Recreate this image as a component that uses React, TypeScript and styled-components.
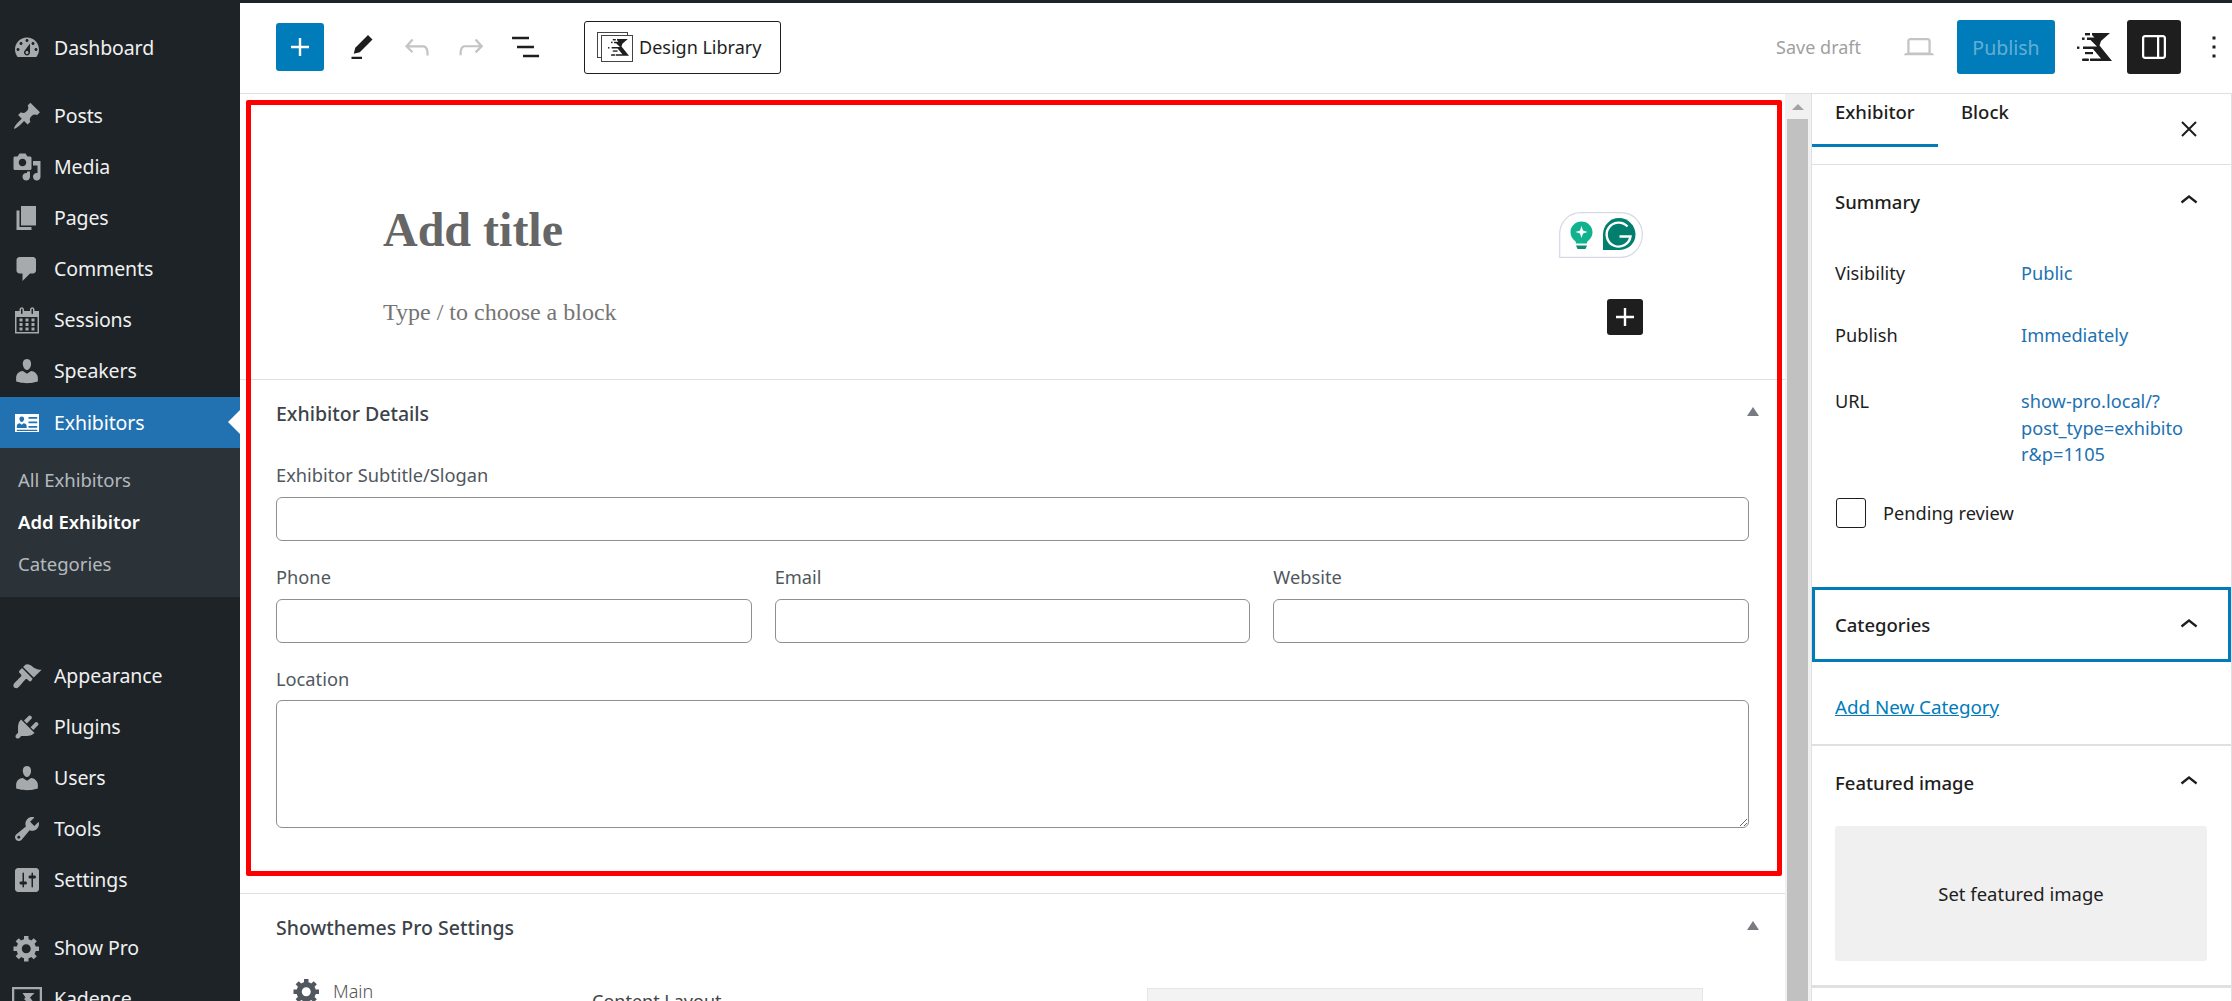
import React from "react";
import styled, { createGlobalStyle } from "styled-components";

const Global = createGlobalStyle`
  html, body { margin: 0; padding: 0; height: 1001px; overflow: hidden; background: #fff; }
  body { font-family: "Noto Sans", "Open Sans", sans-serif; font-size: 19.5px; }
  * { box-sizing: border-box; }
`;

const Shell = styled.div`
  display: grid;
  grid-template-columns: 240px 1fr;
  width: 2232px;
  height: 1001px;
  overflow: hidden;
  position: relative;
`;

/* ---------- admin menu ---------- */
const AdminMenu = styled.nav`
  background: #1d2327;
  padding-top: 22px;
  height: 1001px;
  overflow: hidden;
`;
const MenuGroup = styled.div<{ $gap?: number }>`
  margin-top: ${(p) => p.$gap ?? 0}px;
`;
const MenuItem = styled.div<{ $active?: boolean }>`
  position: relative;
  height: 51px;
  margin-top: ${(p) => (p.$active ? 1 : 0)}px;
  display: flex;
  align-items: center;
  gap: 12px;
  padding-left: 12px;
  color: ${(p) => (p.$active ? "#fff" : "#f0f0f1")};
  background: ${(p) => (p.$active ? "#2271b1" : "transparent")};
  line-height: 1;
  letter-spacing: -0.1px;
  ${(p) =>
    p.$active &&
    `&::after {
      content: "";
      position: absolute;
      right: 0;
      top: 13px;
      border: 12px solid transparent;
      border-right-color: #fff;
      border-left-width: 0;
    }`}
`;
const MenuIcon = styled.svg<{ $active?: boolean; $color?: string }>`
  width: 30px;
  height: 30px;
  flex: none;
  fill: ${(p) => p.$color ?? (p.$active ? "#fff" : "#a7aaad")};
`;
const SubMenu = styled.div`
  background: #2c3338;
  padding: 10px 0 13px;
`;
const SubItem = styled.div<{ $current?: boolean }>`
  height: 42px;
  display: flex;
  align-items: center;
  padding-left: 18px;
  font-size: 18.5px;
  color: ${(p) => (p.$current ? "#fff" : "rgba(240,246,252,.7)")};
  font-weight: ${(p) => (p.$current ? 600 : 400)};
`;

/* ---------- main column ---------- */
const Main = styled.div`
  border-top: 3px solid #1d2327;
  display: flex;
  flex-direction: column;
  min-width: 0;
  height: 1001px;
`;
const Toolbar = styled.header`
  height: 91px;
  flex: none;
  display: flex;
  align-items: center;
  justify-content: space-between;
  border-bottom: 1px solid #e0e0e0;
  padding: 0 0 2px 36px;
`;
const ToolGroup = styled.div`
  display: flex;
  align-items: center;
`;
const InserterButton = styled.button`
  width: 48px;
  height: 48px;
  border: 0;
  border-radius: 3px;
  background: #007cba;
  padding: 6px;
  margin-right: 11px;
  display: flex;
`;
const ToolIcon = styled.svg<{ $color?: string; $size?: number }>`
  width: ${(p) => p.$size ?? 36}px;
  height: ${(p) => p.$size ?? 36}px;
  fill: ${(p) => p.$color ?? "#1e1e1e"};
  flex: none;
`;
const ToolSlot = styled.span`
  width: 54.5px;
  display: flex;
  justify-content: center;
`;
const LibraryButton = styled.button`
  height: 53px;
  width: 197px;
  margin-left: 31px;
  border: 1px solid #1e1e1e;
  border-radius: 3px;
  background: #fff;
  display: flex;
  align-items: center;
  gap: 6px;
  padding: 0 0 0 12px;
  font: 400 18px "Noto Sans", sans-serif;
  color: #1e1e1e;
`;
const SaveDraft = styled.span`
  color: #a0a0a0;
  font-size: 18px;
  margin-right: 40px;
`;
const PublishButton = styled.button`
  width: 98px;
  height: 54px;
  border: 0;
  border-radius: 3px;
  background: #007cba;
  color: rgba(255, 255, 255, 0.4);
  font: 400 19.5px "Noto Sans", sans-serif;
  margin: 0 22px 0 20px;
`;
const PanelToggle = styled.button`
  width: 54px;
  height: 54px;
  border: 0;
  border-radius: 3px;
  background: #1e1e1e;
  padding: 9px;
  display: flex;
  margin: 0 15px 0 15px;
`;

const Workspace = styled.div`
  flex: 1;
  display: flex;
  min-height: 0;
`;
const Editor = styled.main`
  width: 1545px;
  flex: none;
  overflow: hidden;
  display: flex;
  flex-direction: column;
`;
const TitleArea = styled.section`
  height: 286px;
  flex: none;
  border-bottom: 1px solid #e0e0e0;
  padding: 107px 142px 0 143px;
`;
const TitleRow = styled.div`
  display: flex;
  justify-content: space-between;
  align-items: flex-start;
`;
const TitleText = styled.h1`
  margin: 0;
  font: 700 48px/58px "Liberation Serif", serif;
  color: #666;
`;
const BlockRow = styled(TitleRow)`
  margin-top: 35px;
`;
const BlockHint = styled.p`
  margin: 0;
  font: 400 24px/36px "Liberation Serif", serif;
  color: #757575;
`;
const BlockAdd = styled.button`
  width: 36px;
  height: 36px;
  margin-top: 5px;
  border: 0;
  border-radius: 3px;
  background: #1e1e1e;
  padding: 0;
  display: flex;
`;
const Badge = styled.svg`
  width: 84px;
  height: 46px;
  margin-top: 11px;
  flex: none;
`;
const MetaBox = styled.section`
  padding: 0 36px;
  flex: none;
`;
const DetailsBox = styled(MetaBox)`
  height: 514px;
  border-bottom: 1px solid #e0e0e0;
`;
const MetaHeader = styled.div<{ $h: number }>`
  height: ${(p) => p.$h}px;
  display: flex;
  align-items: center;
  justify-content: space-between;
  font-weight: 500;
  color: #3c434a;
  font-size: 19.5px;
`;
const Collapse = styled.i`
  width: 0;
  height: 0;
  border: 6px solid transparent;
  border-top-width: 0;
  border-bottom: 9px solid #787c82;
  margin: -4px -10px 0 0;
`;
const FieldLabel = styled.label`
  display: block;
  height: 28px;
  line-height: 28px;
  color: #50575e;
  font-size: 18.25px;
  margin-bottom: 8px;
`;
const Field = styled.div<{ $top?: number }>`
  margin-top: ${(p) => p.$top ?? 0}px;
`;
const FieldRow = styled.div`
  display: grid;
  grid-template-columns: repeat(3, 1fr);
  gap: 23px;
  margin-top: 22px;
`;
const TextInput = styled.input`
  display: block;
  width: 100%;
  height: 44px;
  border: 1px solid #8c8f94;
  border-radius: 6px;
  background: #fff;
`;
const TextArea = styled.textarea`
  display: block;
  width: 100%;
  height: 128px;
  margin-top: -1px;
  border: 1px solid #8c8f94;
  border-radius: 6px;
  background: #fff;
`;
const SettingsBody = styled.div`
  display: flex;
  padding: 18px 0 0 16px;
`;
const SettingsTab = styled.div`
  width: 300px;
  flex: none;
  display: flex;
  align-items: center;
  gap: 11px;
  height: 26px;
  color: #555;
  font-size: 18px;
  font-weight: 300;
`;
const ContentLabel = styled.div`
  width: 555px;
  flex: none;
  padding-top: 11px;
  color: #444;
  font-size: 18px;
`;
const ContentBox = styled.div`
  width: 556px;
  height: 60px;
  margin-top: 10px;
  background: #f3f3f3;
  border: 1px solid #e5e5e5;
`;

/* ---------- scrollbar ---------- */
const ScrollTrack = styled.div`
  width: 26px;
  flex: none;
  background: #f1f1f1;
  padding-left: 2px;
  padding-right: 3px;
`;
const ScrollArrow = styled.div`
  height: 25px;
  display: flex;
  align-items: center;
  justify-content: center;
  &::before {
    content: "";
    border: 6px solid transparent;
    border-top-width: 0;
    border-bottom: 6px solid #a3a3a3;
  }
`;
const ScrollThumb = styled.div`
  height: 900px;
  background: #c1c1c1;
`;

/* ---------- right sidebar ---------- */
const SidePanel = styled.aside`
  flex: 1;
  min-width: 0;
  border-left: 1px solid #e0e0e0;
  border-right: 1px solid #e0e0e0;
  overflow: hidden;
  color: #1e1e1e;
`;
const TabBar = styled.div`
  height: 71px;
  border-bottom: 1px solid #e0e0e0;
  display: flex;
  align-items: flex-start;
`;
const Tab = styled.div<{ $active?: boolean; $w: number }>`
  width: ${(p) => p.$w}px;
  height: 53px;
  padding-left: 23px;
  line-height: 36px;
  font-weight: 500;
  font-size: 18.5px;
  border-bottom: 3px solid ${(p) => (p.$active ? "#007cba" : "transparent")};
`;
const CloseIcon = styled.svg`
  width: 24px;
  height: 24px;
  margin: 23px 30px 0 auto;
  stroke: #1e1e1e;
  stroke-width: 2;
  fill: none;
  flex: none;
`;
const PanelHeader = styled.div<{ $h: number; $focus?: boolean }>`
  height: ${(p) => p.$h}px;
  display: flex;
  align-items: center;
  justify-content: space-between;
  font-weight: 500;
  font-size: 18.5px;
  padding: ${(p) => (p.$focus ? "0 21px 0 20px" : "0 24px 0 23px")};
  ${(p) => p.$focus && `border: 3px solid #007cba;`}
`;
const SummaryBody = styled.div`
  padding: 23px 23px 0;
  height: 350px;
  font-size: 18.2px;
`;
const SummaryRow = styled.div<{ $top?: number }>`
  display: grid;
  grid-template-columns: 186px 1fr;
  margin-top: ${(p) => p.$top ?? 0}px;
  line-height: 26.5px;
  color: #1e1e1e;
`;
const ValueLink = styled.span`
  color: #2271b1;
`;
const CheckRow = styled.div`
  display: flex;
  align-items: center;
  gap: 17px;
  margin: 30px 0 0 1px;
`;
const CheckBox = styled.span`
  width: 30px;
  height: 30px;
  border: 1px solid #1e1e1e;
  border-radius: 3px;
`;
const CategoryBody = styled.div`
  height: 84px;
  padding: 31px 23px 0;
  border-bottom: 2px solid #e0e0e0;
`;
const AddLink = styled.a`
  color: #007cba;
  text-decoration: underline;
  font-size: 18.8px;
`;
const FeaturedBody = styled.div`
  height: 170px;
  padding: 8px 23px 0;
  border-bottom: 3px solid #e0e0e0;
`;
const FeaturedBox = styled.div`
  height: 135px;
  width: 372px;
  background: #f0f0f0;
  border-radius: 3px;
  display: flex;
  align-items: center;
  justify-content: center;
  font-size: 18.5px;
`;

/* ---------- annotation ---------- */
const Highlight = styled.div`
  position: absolute;
  left: 246px;
  top: 100px;
  width: 1536px;
  height: 776px;
  border: 5px solid #f00;
  border-radius: 2px;
  pointer-events: none;
`;

const P = {
  dashboard:
    "M3.76 16h12.48c1.1-1.37 1.76-3.11 1.76-5 0-4.42-3.58-8-8-8s-8 3.58-8 8c0 1.89.66 3.63 1.76 5zM10 4c.55 0 1 .45 1 1s-.45 1-1 1-1-.45-1-1 .45-1 1-1zM6 6c.55 0 1 .45 1 1s-.45 1-1 1-1-.45-1-1 .45-1 1-1zm8 0c.55 0 1 .45 1 1s-.45 1-1 1-1-.45-1-1 .45-1 1-1zm-5.37 5.55L12 7v6c0 1.1-.9 2-2 2s-2-.9-2-2c0-.57.24-1.08.63-1.45zM4 10c.55 0 1 .45 1 1s-.45 1-1 1-1-.45-1-1 .45-1 1-1zm12 0c.55 0 1 .45 1 1s-.45 1-1 1-1-.45-1-1 .45-1 1-1zm-5 3c0-.55-.45-1-1-1s-1 .45-1 1 .45 1 1 1 1-.45 1-1z",
  pin: "M10.44 3.02l1.82-1.82 6.36 6.35-1.83 1.82c-1.05-.68-2.48-.57-3.41.36l-.75.75c-.92.93-1.04 2.35-.35 3.41l-1.83 1.82-2.41-2.41-2.8 2.79c-.42.42-3.38 2.71-3.8 2.29s1.86-3.39 2.28-3.81l2.79-2.79L4.1 9.36l1.83-1.82c1.05.69 2.48.57 3.4-.36l.75-.75c.93-.92 1.05-2.35.36-3.41z",
  media:
    "M13 11V4c0-.55-.45-1-1-1h-1.67L9 1H5L3.67 3H2c-.55 0-1 .45-1 1v7c0 .55.45 1 1 1h10c.55 0 1-.45 1-1zM7 4.5c1.38 0 2.5 1.12 2.5 2.5S8.38 9.5 7 9.5 4.5 8.38 4.5 7 5.62 4.5 7 4.5zM14 6h5v10.5c0 1.38-1.12 2.5-2.5 2.5S14 17.88 14 16.5s1.12-2.5 2.5-2.5c.17 0 .34.02.5.05V9h-3V6zm-4 8.05V13h2v3.5c0 1.38-1.12 2.5-2.5 2.5S7 17.88 7 16.5 8.12 14 9.5 14c.17 0 .34.02.5.05z",
  page: "M6 15V2h10v13H6zm-1 1h8v2H3V5h2v11z",
  comment:
    "M5 2h9c1.1 0 2 .9 2 2v7c0 1.1-.9 2-2 2h-2l-5 5v-5H5c-1.1 0-2-.9-2-2V4c0-1.1.9-2 2-2z",
  calendar:
    "M15 4h3v15H2V4h3V3c0-.41.15-.76.44-1.06.29-.29.65-.44 1.06-.44s.77.15 1.06.44c.29.3.44.65.44 1.06v1h4V3c0-.41.15-.76.44-1.06.29-.29.65-.44 1.06-.44s.77.15 1.06.44c.29.3.44.65.44 1.06v1zM6 3v2.5c0 .14.05.26.15.36.09.09.21.14.35.14s.26-.05.35-.14c.1-.1.15-.22.15-.36V3c0-.14-.05-.26-.15-.35-.09-.1-.21-.15-.35-.15s-.26.05-.35.15c-.1.09-.15.21-.15.35zm7 0v2.5c0 .14.05.26.14.36.1.09.22.14.36.14s.26-.05.36-.14c.09-.1.14-.22.14-.36V3c0-.14-.05-.26-.14-.35-.1-.1-.22-.15-.36-.15s-.26.05-.36.15c-.09.09-.14.21-.14.35zm4 15V8H3v10h14zM7 9v2H5V9h2zm2 0h2v2H9V9zm4 2V9h2v2h-2zm-6 1v2H5v-2h2zm2 0h2v2H9v-2zm4 2v-2h2v2h-2zm-6 1v2H5v-2h2zm4 2H9v-2h2v2zm4 0h-2v-2h2v2z",
  user: "M10 9.25c-2.27 0-2.73-3.44-2.73-3.44C7 4.02 7.82 2 9.97 2c2.16 0 2.98 2.02 2.71 3.81 0 0-.41 3.44-2.68 3.44zm0 2.57L12.72 10c2.39 0 4.52 2.33 4.52 4.53v2.49s-3.65 1.13-7.24 1.13c-3.65 0-7.24-1.13-7.24-1.13v-2.49c0-2.25 1.94-4.48 4.47-4.48z",
  card: "M2 4h16v12H2V4zm4.500 1.600c-1.100 0-1.700.9-1.550 1.900.12.9.7 1.800 1.550 1.800s1.430-.9 1.550-1.800c.15-1-.45-1.900-1.550-1.900zM3.200 13.400h6.600v-1.300c0-1-1-1.900-2-1.900l-1.300.9-1.300-.9c-1 0-2 .9-2 1.900v1.300zM11 6v1.200h5.800V6H11zm0 3v1.200h5.800V9H11zm0 3v1.200h5.800V12H11zM3.200 14.500v.8h13.600v-.8H3.200z",
  brush:
    "M14.48 11.06L7.41 3.99l1.5-1.5c.5-.56 2.3-.47 3.51.32 1.21.8 1.43 1.28 2.91 2.1 1.18.64 2.45 1.26 4.45.85zm-.71.71L6.7 4.7 4.93 6.47c-.39.39-.39 1.02 0 1.41l1.06 1.06c.39.39.39 1.03 0 1.42-.6.6-3.99 3.91-4.49 4.54-.9 1.020-.7 2.4.2 3 1 .6 2 .3 2.7-.5.5-.5 3.900-4.500 4.500-5.100.39-.39 1.02-.39 1.41 0l1.06 1.06c.39.39 1.02.39 1.41 0z",
  plug: "M13.11 4.36L9.87 7.6 8 5.73l3.24-3.24c.35-.34 1.05-.2 1.56.32.52.51.66 1.21.31 1.55zm-8 1.77l.91-1.12 9.01 9.01-1.19.84c-.71.71-2.63 1.16-3.82 1.16H6.14L4.9 17.26c-.59.59-1.54.59-2.12 0-.59-.58-.59-1.53 0-2.12l1.24-1.24v-3.88c0-1.13.4-3.19 1.09-3.89zm7.26 3.97l3.24-3.24c.34-.35 1.04-.21 1.55.31.52.51.66 1.21.31 1.55l-3.24 3.25z",
  wrench:
    "M16.68 9.77c-1.34 1.34-3.3 1.67-4.95.99l-5.41 6.52c-.99.99-2.59.99-3.58 0s-.99-2.59 0-3.57l6.52-5.42c-.68-1.65-.35-3.61.99-4.95 1.28-1.28 3.12-1.62 4.72-1.06l-2.89 2.89 2.82 2.82 2.86-2.87c.53 1.58.18 3.39-1.08 4.65zM3.81 16.21c.4.39 1.04.39 1.43 0 .4-.4.4-1.04 0-1.43-.39-.4-1.03-.4-1.43 0-.39.39-.39 1.03 0 1.43z",
  sliders:
    "M18 16V4c0-1.1-.9-2-2-2H4c-1.1 0-2 .9-2 2v12c0 1.1.9 2 2 2h12c1.1 0 2-.9 2-2zM8 11h1c.55 0 1 .45 1 1s-.45 1-1 1H8v1.5c0 .28-.22.5-.5.5s-.5-.22-.5-.5V13H6c-.55 0-1-.45-1-1s.45-1 1-1h1V5.5c0-.28.22-.5.5-.5s.5.22.5.5V11zm5-2h-1c-.55 0-1-.45-1-1s.45-1 1-1h1V5.5c0-.28.22-.5.5-.5s.5.22.5.5V7h1c.55 0 1 .45 1 1s-.45 1-1 1h-1v5.5c0 .28-.22.5-.5.5s-.5-.22-.5-.5V9z",
  gear: "M18 12h-2.18c-.17.7-.44 1.35-.81 1.93l1.54 1.54-2.1 2.1-1.54-1.54c-.58.36-1.23.63-1.91.79V19H8v-2.18c-.68-.16-1.33-.43-1.91-.79l-1.54 1.54-2.12-2.12 1.54-1.54c-.36-.58-.63-1.23-.79-1.91H1V9.03h2.17c.16-.7.44-1.35.8-1.94L2.43 5.55l2.1-2.1 1.54 1.54c.58-.37 1.24-.64 1.93-.81V2h3v2.18c.68.16 1.33.43 1.91.79l1.54-1.54 2.12 2.12-1.54 1.54c.36.59.64 1.24.8 1.94H18V12zm-8.5 1.5c1.66 0 3-1.34 3-3s-1.34-3-3-3-3 1.34-3 3 1.34 3 3 3z",
  kadence: "M0 2h20v16H0V2zm1.500 1.500v13h17v-13h-17zM7 6h8l-3 3 3 4H9l1-1-2-2 1-1-2-3z",
  plus: "M18 11.2h-5.2V6h-1.6v5.2H6v1.6h5.2V18h1.6v-5.2H18z",
  pen: "m19 7-3-3-8.5 8.5-1 4 4-1L19 7Zm-7 11.5H5V20h7v-1.5Z",
  undo: "M18.3 11.7c-.6-.6-1.4-.9-2.3-.9H6.7l2.9-3.3-1.1-1-4.5 5L8.5 16l1-1-2.7-2.7H16c.5 0 .9.2 1.3.5 1 1 1 3.4 1 4.5v.3h1.5v-.2c0-1.5 0-4.3-1.5-5.7z",
  redo: "M15.6 6.5l-1.1 1 2.9 3.3H8c-.9 0-1.7.3-2.3.9-1.4 1.5-1.4 4.2-1.4 5.6v.2h1.5v-.3c0-1.1 0-3.5 1-4.5.3-.3.7-.5 1.3-.5h9.2L14.5 15l1.1 1.1 4.6-4.6-4.6-5z",
  list: "M2.700 5.200H14v1.600H2.700zM6 11.200h11.300v1.600H6zM10 17.200h10.700v1.600H10z",
  laptop:
    "M20.5 16h-.7V8c0-1.1-.9-2-2-2H6.2c-1.1 0-2 .9-2 2v8h-.7c-.8 0-1.5.7-1.5 1.5h20c0-.8-.7-1.5-1.5-1.5zM5.7 8c0-.3.2-.5.5-.5h11.6c.3 0 .5.2.5.5v7.6H5.7V8z",
  panel:
    "M18 4H6c-1.1 0-2 .9-2 2v12c0 1.1.9 2 2 2h12c1.1 0 2-.9 2-2V6c0-1.1-.9-2-2-2zm-4 14.5H6c-.3 0-.5-.2-.5-.5V6c0-.3.2-.5.5-.5h8v13zm4.5-.5c0 .3-.2.5-.5.5h-2.5v-13H18c.3 0 .5.2.5.5v12z",
  kebab: "M13 19h-2v-2h2v2zm0-6h-2v-2h2v2zm0-6h-2V5h2v2z",
  chevronUp: "M6.5 12.4L12 8l5.5 4.4-.9 1.2L12 10l-4.5 3.6-1-1.2z",
};

const Menu = ({ icon, label, active }: { icon: string; label: string; active?: boolean }) => (
  <MenuItem $active={active}>
    <MenuIcon viewBox="0 0 20 20" $active={active}>
      <path d={icon} fillRule="evenodd" />
    </MenuIcon>
    {label}
  </MenuItem>
);

const Tool = ({ d, color, size }: { d: string; color?: string; size?: number }) => (
  <ToolIcon viewBox="0 0 24 24" $color={color} $size={size}>
    <path d={d} />
  </ToolIcon>
);

const LogoShapes = () => (
  <>
    <path d="M15 0H33L24 8 22.500 12.500 35 28H13v-2.400H24L16 16H6v-2.500H20L13.500 7H10V4.500H17.500L15 2V0Z" />
    <rect x="8" y="0" width="5" height="2.400" />
    <rect x="5" y="4.500" width="2.600" height="2.400" />
    <rect x="0" y="13.500" width="2.400" height="2.400" />
    <rect x="8" y="19" width="8" height="2.200" />
    <rect x="5" y="25.500" width="7" height="2.500" rx="1" />
  </>
);

const LogoMark = () => (
  <svg viewBox="0 0 35 28" width="35" height="28" fill="#1e1e1e">
    <LogoShapes />
  </svg>
);

const LibraryIcon = () => (
  <svg width="36" height="30" viewBox="0 0 36 30">
    <rect x="0.5" y="0.500" width="30" height="25" fill="#fff" stroke="#444" />
    <rect x="4.500" y="3.500" width="31" height="26" fill="#fff" stroke="#444" />
    <g transform="translate(11 7) scale(.6)" fill="#1e1e1e">
      <LogoShapes />
    </g>
  </svg>
);

const GrammarlyBadge = () => (
  <Badge viewBox="0 0 84 46">
    <path d="M.7 45.3V22C.7 10 10 .7 22 .7h40C74 .7 83.3 10 83.3 22.500S74 45.300 62 45.300z" fill="#fff" stroke="#d5d9e6" strokeWidth="1.200" />
    <path d="M22.500 9.500c6.200 0 11 4.800 11 10.700 0 3.800-2 6.500-4.500 8.800-.9.8-1 1.500-1 2.500h-11c0-1-.1-1.700-1-2.500-2.500-2.300-4.500-5-4.500-8.800 0-5.900 4.800-10.700 11-10.700z" fill="#11b38f" />
    <path d="M22.500 14l1.500 4.500 4.500 1.500-4.500 1.500-1.500 4.500-1.500-4.500-4.500-1.500 4.500-1.500z" fill="#fff" />
    <path d="M17 33.500h11l-1.500 3.500h-8z" fill="#0f8a73" />
    <path d="M44 38V22.500C44 13.500 51 6 60 6s16.500 7.500 16.500 16.500S69 38 60 38z" fill="#027e6f" />
    <path d="M68.500 14.500A12 12 0 1 0 71.500 24.500H60.500" fill="none" stroke="#fff" strokeWidth="2.400" />
  </Badge>
);

export default function App() {
  return (
    <>
      <Global />
      <Shell>
        <AdminMenu>
          <Menu icon={P.dashboard} label="Dashboard" />
          <MenuGroup $gap={17}>
            <Menu icon={P.pin} label="Posts" />
            <Menu icon={P.media} label="Media" />
            <Menu icon={P.page} label="Pages" />
            <Menu icon={P.comment} label="Comments" />
            <Menu icon={P.calendar} label="Sessions" />
            <Menu icon={P.user} label="Speakers" />
            <Menu icon={P.card} label="Exhibitors" active />
          </MenuGroup>
          <SubMenu>
            <SubItem>All Exhibitors</SubItem>
            <SubItem $current>Add Exhibitor</SubItem>
            <SubItem>Categories</SubItem>
          </SubMenu>
          <MenuGroup $gap={53}>
            <Menu icon={P.brush} label="Appearance" />
            <Menu icon={P.plug} label="Plugins" />
            <Menu icon={P.user} label="Users" />
            <Menu icon={P.wrench} label="Tools" />
            <Menu icon={P.sliders} label="Settings" />
          </MenuGroup>
          <MenuGroup $gap={17}>
            <Menu icon={P.gear} label="Show Pro" />
            <Menu icon={P.kadence} label="Kadence" />
          </MenuGroup>
        </AdminMenu>

        <Main>
          <Toolbar>
            <ToolGroup>
              <InserterButton aria-label="Add block">
                <Tool d={P.plus} color="#fff" />
              </InserterButton>
              <ToolSlot>
                <Tool d={P.pen} />
              </ToolSlot>
              <ToolSlot>
                <Tool d={P.undo} color="#c4c4c4" />
              </ToolSlot>
              <ToolSlot>
                <Tool d={P.redo} color="#c4c4c4" />
              </ToolSlot>
              <ToolSlot>
                <Tool d={P.list} />
              </ToolSlot>
              <LibraryButton>
                <LibraryIcon />
                Design Library
              </LibraryButton>
            </ToolGroup>
            <ToolGroup>
              <SaveDraft>Save draft</SaveDraft>
              <Tool d={P.laptop} color="#c4c4c4" />
              <PublishButton>Publish</PublishButton>
              <LogoMark />
              <PanelToggle aria-label="Settings">
                <Tool d={P.panel} color="#fff" />
              </PanelToggle>
              <Tool d={P.kebab} />
            </ToolGroup>
          </Toolbar>

          <Workspace>
            <Editor>
              <TitleArea>
                <TitleRow>
                  <TitleText>Add title</TitleText>
                  <GrammarlyBadge />
                </TitleRow>
                <BlockRow>
                  <BlockHint>Type / to choose a block</BlockHint>
                  <BlockAdd aria-label="Add block">
                    <Tool d={P.plus} color="#fff" />
                  </BlockAdd>
                </BlockRow>
              </TitleArea>

              <DetailsBox>
                <MetaHeader $h={66}>
                  Exhibitor Details
                  <Collapse />
                </MetaHeader>
                <Field $top={15}>
                  <FieldLabel>Exhibitor Subtitle/Slogan</FieldLabel>
                  <TextInput />
                </Field>
                <FieldRow>
                  <div>
                    <FieldLabel>Phone</FieldLabel>
                    <TextInput />
                  </div>
                  <div>
                    <FieldLabel>Email</FieldLabel>
                    <TextInput />
                  </div>
                  <div>
                    <FieldLabel>Website</FieldLabel>
                    <TextInput />
                  </div>
                </FieldRow>
                <Field $top={22}>
                  <FieldLabel>Location</FieldLabel>
                  <TextArea />
                </Field>
              </DetailsBox>

              <MetaBox>
                <MetaHeader $h={66}>
                  Showthemes Pro Settings
                  <Collapse />
                </MetaHeader>
                <SettingsBody>
                  <SettingsTab>
                    <MenuIcon viewBox="0 0 20 20" $color="#50575e">
                      <path d={P.gear} fillRule="evenodd" />
                    </MenuIcon>
                    Main
                  </SettingsTab>
                  <ContentLabel>Content Layout</ContentLabel>
                  <ContentBox />
                </SettingsBody>
              </MetaBox>
            </Editor>

            <ScrollTrack>
              <ScrollArrow />
              <ScrollThumb />
            </ScrollTrack>

            <SidePanel>
              <TabBar>
                <Tab $active $w={126}>Exhibitor</Tab>
                <Tab $w={126}>Block</Tab>
                <CloseIcon viewBox="0 0 24 24">
                  <path d="M5 5l14 14M19 5L5 19" />
                </CloseIcon>
              </TabBar>
              <PanelHeader $h={72}>
                Summary
                <Tool d={P.chevronUp} size={36} />
              </PanelHeader>
              <SummaryBody>
                <SummaryRow>
                  <span>Visibility</span>
                  <ValueLink>Public</ValueLink>
                </SummaryRow>
                <SummaryRow $top={35}>
                  <span>Publish</span>
                  <ValueLink>Immediately</ValueLink>
                </SummaryRow>
                <SummaryRow $top={40}>
                  <span>URL</span>
                  <ValueLink>
                    show-pro.local/?
                    <br />
                    post_type=exhibito
                    <br />
                    r&amp;p=1105
                  </ValueLink>
                </SummaryRow>
                <CheckRow>
                  <CheckBox />
                  Pending review
                </CheckRow>
              </SummaryBody>
              <PanelHeader $h={75} $focus>
                Categories
                <Tool d={P.chevronUp} size={36} />
              </PanelHeader>
              <CategoryBody>
                <AddLink>Add New Category</AddLink>
              </CategoryBody>
              <PanelHeader $h={72}>
                Featured image
                <Tool d={P.chevronUp} size={36} />
              </PanelHeader>
              <FeaturedBody>
                <FeaturedBox>Set featured image</FeaturedBox>
              </FeaturedBody>
            </SidePanel>
          </Workspace>
        </Main>
        <Highlight />
      </Shell>
    </>
  );
}
